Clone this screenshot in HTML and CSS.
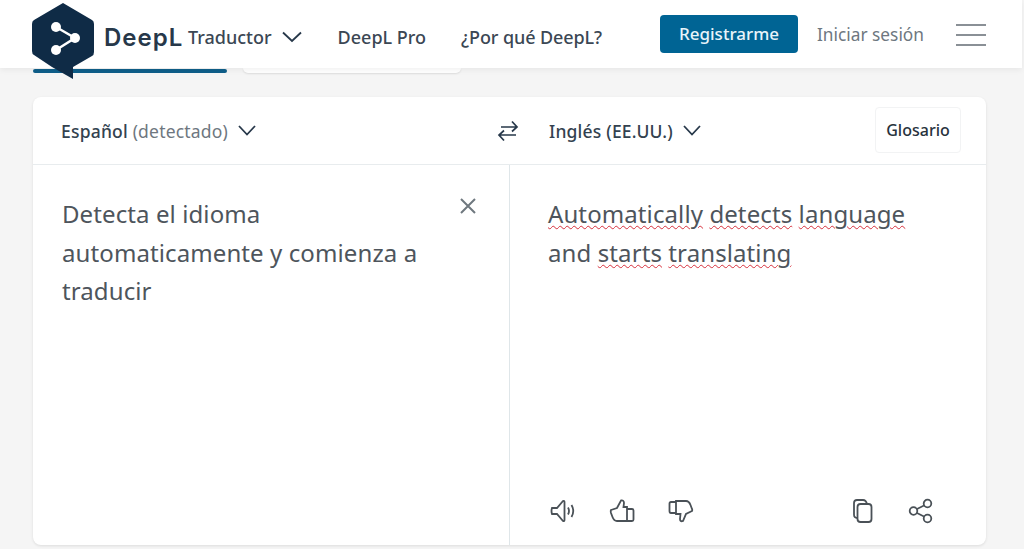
FILE: index.html
```html
<!DOCTYPE html>
<html lang="es">
<head>
    <meta charset="UTF-8">
    <meta name="viewport" content="width=device-width, initial-scale=1.0">
    <title>DeepL Traductor</title>
    <link rel="stylesheet" href="styles.css">
</head>
<body>
    <header class="site-header">
        <svg class="logo" width="62" height="78" viewBox="0 0 62 78">
            <path d="M31 1 L60 18 Q62 19 62 22 L62 50 Q62 53 60 54 L41 65 L41 77 L20 65 L2 53 Q0 52 0 49 L0 22 Q0 19 2 18 Z" fill="#0f2b46"/>
            <path d="M24 25 L43 36 L24 48" fill="none" stroke="#fff" stroke-width="2.5"/>
            <circle cx="24" cy="25" r="5" fill="#fff"/>
            <circle cx="43" cy="36" r="5" fill="#fff"/>
            <circle cx="24" cy="48" r="5" fill="#fff"/>
        </svg>
        <span class="brand">DeepL</span>
        <a class="nav-link product">Traductor
            <svg class="chevron" width="20" height="12" viewBox="0 0 20 12"><path d="M1 1.5 L10 10 L19 1.5"/></svg>
        </a>
        <a class="nav-link pro">DeepL Pro</a>
        <a class="nav-link why">¿Por qué DeepL?</a>
        <button class="signup">Registrarme</button>
        <a class="login">Iniciar sesión</a>
        <div class="burger"><span></span><span></span><span></span></div>
    </header>

    <div class="tabs">
        <div class="tab active"></div>
        <div class="tab"></div>
    </div>

    <main class="translator">
        <div class="lang-bar">
            <div class="lang-source">
                <strong>Español</strong>&nbsp;<span class="muted">(detectado)</span>
                <svg class="chevron small" width="18" height="11" viewBox="0 0 18 11"><path d="M1 1 L9 9.5 L17 1"/></svg>
            </div>
            <svg class="swap" width="24" height="24" viewBox="0 0 24 24">
                <path d="M5 8 H21 M16 2.5 L21 8 L16 12.5 M20 16 H3 M8 11.5 L3 16 L8 21.5"/>
            </svg>
            <div class="lang-target">
                <strong>Inglés (EE.UU.)</strong>
                <svg class="chevron small" width="18" height="11" viewBox="0 0 18 11"><path d="M1 1 L9 9.5 L17 1"/></svg>
            </div>
            <button class="glossary">Glosario</button>
        </div>
        <div class="panes">
            <section class="pane source">
                <p class="text">Detecta el idioma automaticamente y comienza a traducir</p>
                <svg class="clear" width="18" height="18" viewBox="0 0 18 18"><path d="M2 2 L16 16 M16 2 L2 16"/></svg>
            </section>
            <section class="pane target">
                <p class="text"><span class="spell">Automatically</span> <span class="spell">detects</span> <span class="spell">language</span> and <span class="spell">starts</span> <span class="spell">translating</span></p>
                <div class="actions">
                    <svg class="icon" width="26" height="26" viewBox="0 0 26 26">
                        <path d="M2 10 L7 10 L13 3 Q14.500 2.500 14.500 4 L14.500 22 Q14.500 23.500 13 23 L7 16 L2 16 Q1 13 2 10 Z"/>
                        <path d="M18 9.500 Q20 13 18 16.500 M21.500 7 Q25 13 21.500 19"/>
                    </svg>
                    <svg class="icon like" width="26" height="26" viewBox="0 0 26 26">
                        <path d="M2 12 L8 10 L12 2.500 Q15 2 15 5 L14.500 9 L18 9 L18 23 L8 23 Q5 23 3.500 19 L2 15 Q1.500 13 2 12 Z"/>
                        <path d="M18 11 L23 11 Q24.500 11 24.500 12.500 L24.500 21.500 Q24.500 23 23 23 L18 23"/>
                    </svg>
                    <svg class="icon dislike" width="26" height="26" viewBox="0 0 26 26">
                        <path d="M24 13 L18 16 L15 23 Q12 24 12 21 L12.500 16 L8 16 L8 3 L18 3 Q21 3 22.500 7 L24 11 Q24.500 12 24 13 Z"/>
                        <path d="M8 4 L3 4 Q1.500 4 1.500 5.500 L1.500 13 Q1.500 15 3 15 L8 15"/>
                    </svg>
                    <svg class="icon copy" width="24" height="26" viewBox="0 0 24 26">
                        <rect x="6.500" y="6" width="14" height="18" rx="3"/>
                        <path d="M6.500 20 Q3 20 3 16.500 L3 5 Q3 2 6 2 L12 2 Q15 2 16 6"/>
                    </svg>
                    <svg class="icon share" width="26" height="26" viewBox="0 0 26 26">
                        <circle cx="19.500" cy="5.500" r="3.800"/>
                        <circle cx="5.500" cy="13" r="3.800"/>
                        <circle cx="19.500" cy="20.500" r="3.800"/>
                        <path d="M9 11 L16 7.500 M9 15 L16 18.500"/>
                    </svg>
                </div>
            </section>
        </div>
    </main>
</body>
</html>
```

FILE: styles.css
```css
* {
    box-sizing: border-box;
}
html, body {
    height: 549px;
    overflow: hidden;
}
body {
    margin: 0;
    background-color: #f5f5f5;
    font-family: 'Noto Sans', 'Open Sans', Arial, sans-serif;
    color: #434a52;
}
svg {
    flex: none;
    fill: none;
}
.site-header {
    position: relative;
    z-index: 2;
    display: flex;
    align-items: center;
    width: 1022px;
    height: 68px;
    padding-left: 32px;
    background-color: #fff;
    box-shadow: 0 2px 6px rgba(0, 0, 0, 0.06);
}
.logo {
    align-self: flex-start;
    margin-top: 2px;
}
.brand {
    width: 79px;
    margin-left: 10px;
    padding-top: 6px;
    font-family: 'Inter', 'Noto Sans', sans-serif;
    font-size: 24px;
    font-weight: 600;
    letter-spacing: 1px;
    color: #27384a;
}
.nav-link {
    display: flex;
    align-items: center;
    padding-top: 6px;
    font-size: 18px;
    font-weight: 500;
    color: #3b4754;
}
.product {
    margin-left: 5px;
}
.pro {
    margin-left: 36px;
}
.why {
    margin-left: 35px;
    letter-spacing: -0.1px;
}
.chevron path {
    stroke: #27384a;
    stroke-width: 1.8;
}
.product .chevron {
    margin-left: 10px;
}
.signup {
    margin-left: 58px;
    margin-bottom: 1px;
    width: 138px;
    height: 38px;
    border: none;
    border-radius: 4px;
    background-color: #006494;
    color: #e8f4fa;
    font-family: inherit;
    font-size: 17px;
    font-weight: 500;
}
.login {
    margin-left: 19px;
    font-size: 17.300px;
    color: #6e7780;
}
.burger {
    display: flex;
    flex-direction: column;
    gap: 8px;
    margin-left: 32px;
    margin-top: 2px;
    width: 30px;
}
.burger span {
    height: 2px;
    background-color: #8a9096;
}
.tabs {
    display: flex;
    gap: 16px;
    height: 29px;
    padding-left: 33px;
}
.tab {
    width: 218px;
    height: 5px;
    border-radius: 0 0 6px 6px;
    background-color: #fff;
    box-shadow: 0 1px 2px rgba(0, 0, 0, 0.1);
}
.tab.active {
    width: 194px;
    height: 4px;
    margin-top: 1px;
    border-radius: 2px;
    background-color: #0f5f8a;
    box-shadow: none;
}
.translator {
    width: 953px;
    height: 448px;
    margin-left: 33px;
    display: flex;
    flex-direction: column;
    border-radius: 8px;
    background-color: #fff;
    box-shadow: 0 1px 3px rgba(0, 0, 0, 0.1);
}
.lang-bar {
    display: flex;
    align-items: center;
    height: 68px;
    flex: none;
    border-bottom: 1px solid #e8ecee;
    font-size: 17.500px;
    letter-spacing: 0.2px;
    color: #33424f;
}
.lang-bar strong {
    font-weight: 500;
}
.muted {
    color: #6e7780;
}
.lang-source {
    display: flex;
    align-items: center;
    width: 463px;
    padding-left: 28px;
}
.chevron.small {
    margin-left: 10px;
}
.swap path {
    stroke: #27384a;
    stroke-width: 1.7;
}
.lang-target {
    display: flex;
    align-items: center;
    margin-left: 29px;
}
.glossary {
    margin-left: auto;
    margin-right: 25px;
    margin-bottom: 2px;
    width: 86px;
    height: 46px;
    border: 1px solid #f2f3f4;
    border-radius: 4px;
    background-color: #fff;
    color: #27323c;
    font-family: inherit;
    font-size: 16px;
    font-weight: 500;
}
.panes {
    display: flex;
    flex: 1;
}
.pane {
    position: relative;
    flex: none;
}
.pane.source {
    width: 477px;
    padding: 30px 60px 0 29px;
    border-right: 1px solid #dfe6e9;
}
.pane.target {
    flex: 1;
    display: flex;
    flex-direction: column;
    justify-content: space-between;
    padding: 30px 40px 0 38px;
}
.text {
    margin: 0;
    font-size: 24px;
    line-height: 38.500px;
    letter-spacing: 0.1px;
    color: #4e555c;
}
.spell {
    text-decoration: underline wavy #d6303c 1px;
    text-underline-offset: 2px;
}
.clear {
    position: absolute;
    top: 32px;
    right: 32px;
}
.clear path {
    stroke: #6f787f;
    stroke-width: 2;
}
.actions {
    display: flex;
    align-items: center;
    padding-bottom: 21px;
    margin-left: 2px;
}
.icon * {
    stroke: #4a5157;
    stroke-width: 1.8;
}
.like {
    margin-left: 33px;
}
.dislike {
    margin-left: 33px;
}
.copy {
    margin-left: 157px;
}
.share {
    margin-left: 33px;
}
```
